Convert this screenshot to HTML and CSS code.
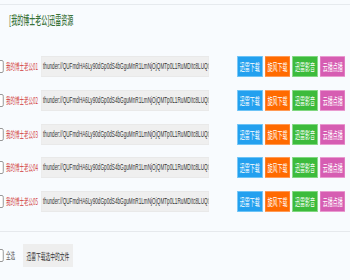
FILE: index.html
```html
<!DOCTYPE html>
<html lang="zh-CN">
<head>
<meta charset="utf-8">
<title>迅雷资源</title>
<link rel="stylesheet" href="styles.css">
</head>
<body>
<div class="page">
  <div class="topline"></div>
  <h2 class="title">[我的博士老公]迅雷资源</h2>
  <ul class="list">
    <li class="row">
      <input type="checkbox" class="chk">
      <span class="name">我的博士老公01</span>
      <div class="link">thunder://QUFmdHA6Ly90dGp0dS4bGguMnR1LmNjOjQMTp0L1RuMDItc8LUQtQUFmdHA6Ly90</div>
      <div class="btns">
        <a class="btn blue">迅雷下载</a>
        <a class="btn orange">旋风下载</a>
        <a class="btn green">迅雷影音</a>
        <a class="btn pink">云播点播</a>
      </div>
    </li>
    <li class="row">
      <input type="checkbox" class="chk">
      <span class="name">我的博士老公02</span>
      <div class="link">thunder://QUFmdHA6Ly90dGp0dS4bGguMnR1LmNjOjQMTp0L1RuMDItc8LUQtQUFmdHA6Ly90</div>
      <div class="btns">
        <a class="btn blue">迅雷下载</a>
        <a class="btn orange">旋风下载</a>
        <a class="btn green">迅雷影音</a>
        <a class="btn pink">云播点播</a>
      </div>
    </li>
    <li class="row">
      <input type="checkbox" class="chk">
      <span class="name">我的博士老公03</span>
      <div class="link">thunder://QUFmdHA6Ly90dGp0dS4bGguMnR1LmNjOjQMTp0L1RuMDItc8LUQtQUFmdHA6Ly90</div>
      <div class="btns">
        <a class="btn blue">迅雷下载</a>
        <a class="btn orange">旋风下载</a>
        <a class="btn green">迅雷影音</a>
        <a class="btn pink">云播点播</a>
      </div>
    </li>
    <li class="row">
      <input type="checkbox" class="chk">
      <span class="name">我的博士老公04</span>
      <div class="link">thunder://QUFmdHA6Ly90dGp0dS4bGguMnR1LmNjOjQMTp0L1RuMDItc8LUQtQUFmdHA6Ly90</div>
      <div class="btns">
        <a class="btn blue">迅雷下载</a>
        <a class="btn orange">旋风下载</a>
        <a class="btn green">迅雷影音</a>
        <a class="btn pink">云播点播</a>
      </div>
    </li>
    <li class="row">
      <input type="checkbox" class="chk">
      <span class="name">我的博士老公05</span>
      <div class="link">thunder://QUFmdHA6Ly90dGp0dS4bGguMnR1LmNjOjQMTp0L1RuMDItc8LUQtQUFmdHA6Ly90</div>
      <div class="btns">
        <a class="btn blue">迅雷下载</a>
        <a class="btn orange">旋风下载</a>
        <a class="btn green">迅雷影音</a>
        <a class="btn pink">云播点播</a>
      </div>
    </li>
  </ul>
  <div class="divider"></div>
  <div class="footer">
    <input type="checkbox" class="chk">
    <span class="all">全选</span>
    <a class="dl-selected">迅雷下载选中的文件</a>
  </div>
</div>
</body>
</html>
```

FILE: styles.css
```css
html, body {
  margin: 0;
  padding: 0;
  background: #f8fbfe;
  overflow: hidden;
}
body {
  width: 350px;
  height: 280px;
  font-family: "Noto Sans CJK SC", "Noto Sans", sans-serif;
}
.page {
  width: 700px;
  transform: scaleX(0.5);
  transform-origin: 0 0;
}
.topline {
  margin-top: 4px;
  height: 1px;
  background: #e6eaee;
}
.title {
  margin: 8px 0 0 18px;
  font-size: 12px;
  line-height: 14px;
  height: 14px;
  font-weight: 500;
  color: #3a733a;
}
.list {
  list-style: none;
  margin: 29px 0 0 0;
  padding: 0;
}
.row {
  display: flex;
  align-items: center;
  height: 21px;
  margin-bottom: 12.75px;
}
.chk {
  width: 13px;
  height: 13px;
  margin: 0 5px 0 -6px;
  flex: none;
}
.name {
  width: 70px;
  flex: none;
  font-size: 9px;
  color: #d23b3b;
  white-space: nowrap;
}
.link {
  width: 328px;
  height: 19px;
  padding: 0 3px;
  flex: none;
  background: #efefef;
  border: 1px solid #e9e9e9;
  font-family: "Liberation Sans", Arial, sans-serif;
  font-size: 9.3px;
  line-height: 19px;
  color: #333;
  white-space: nowrap;
  overflow: hidden;
}
.btns {
  display: flex;
  gap: 5.3px;
  margin-left: 56.6px;
}
.btn {
  box-sizing: border-box;
  width: 50px;
  height: 21px;
  display: flex;
  align-items: center;
  justify-content: center;
  font-size: 10px;
  color: #fff;
  border: 1px solid;
  white-space: nowrap;
}
.blue { background: #23a0ef; border-color: #6cc3f6; }
.orange { background: #ff6a00; border-color: #ff9a55; }
.green { background: #3cbb3c; border-color: #7fd77f; }
.pink { background: #d65db2; border-color: #e99bd0; }
.divider {
  margin-top: 19px;
  height: 1px;
  background: #e6e9ed;
}
.footer {
  display: flex;
  align-items: center;
  margin-top: 12px;
  height: 23px;
}
.all {
  width: 34px;
  flex: none;
  font-size: 9px;
  color: #555;
}
.dl-selected {
  width: 100px;
  height: 23px;
  display: flex;
  align-items: center;
  justify-content: center;
  background: #eeeeee;
  font-size: 9.5px;
  color: #333;
  white-space: nowrap;
}
```
